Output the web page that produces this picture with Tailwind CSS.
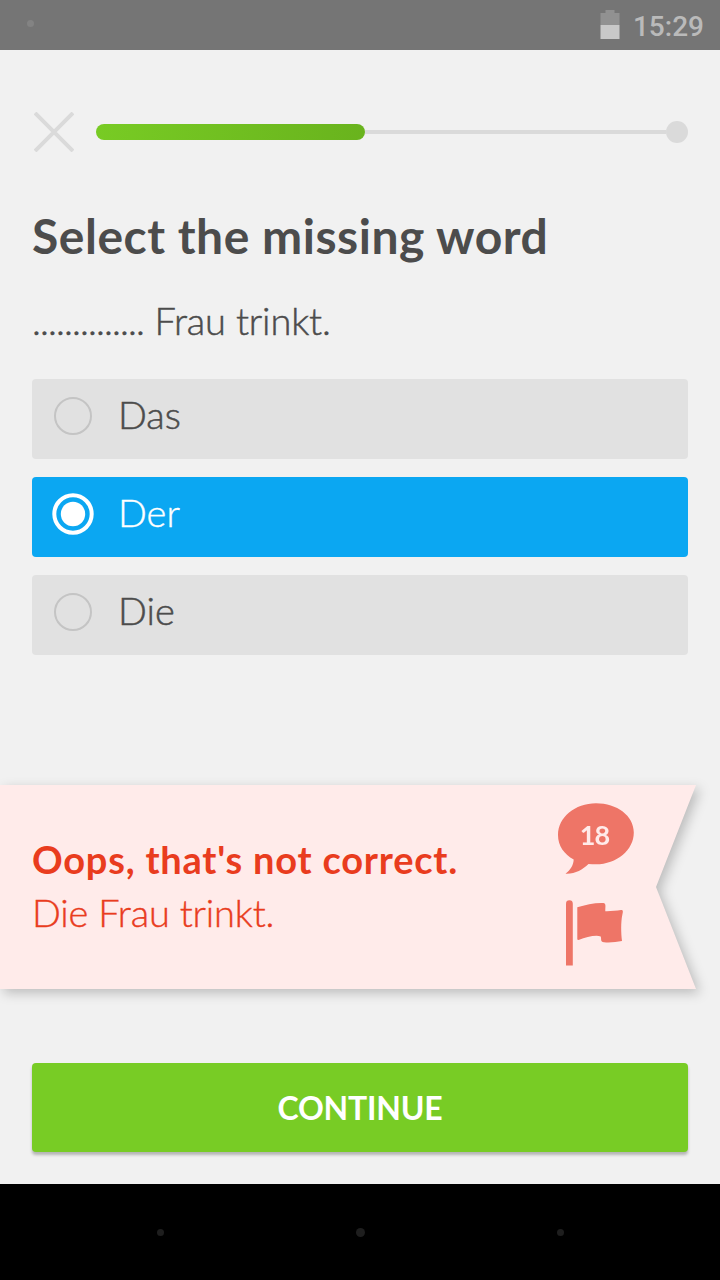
<!DOCTYPE html>
<html lang="en">
<head>
<meta charset="utf-8">
<title>Select the missing word</title>
<script src="https://cdn.jsdelivr.net/npm/@tailwindcss/browser@4"></script>
</head>
<body class="h-[1280px] w-[720px] overflow-hidden bg-[#f1f1f1] font-['Lato',sans-serif] text-[#4c4c4c]">
<div class="flex h-full flex-col">
  <header class="flex h-[50px] shrink-0 items-center justify-between bg-[#757575] pr-4 pl-[27px]">
    <span class="mb-[3px] size-[7px] rounded-full bg-[#838383]"></span>
    <div class="flex items-center">
      <svg class="h-[30px] w-5" viewBox="0 0 20 30"><path fill="#919191" d="M5.500 0h9v3h5v12h-19V3h5z"/><path fill="#c8c8c8" d="M.5 15h19v14h-19z"/></svg>
      <span class="ml-[13px] mt-[3px] font-['Roboto',sans-serif] text-[28px] leading-[50px] font-medium text-[#bababa]">15:29</span>
    </div>
  </header>

  <main class="flex flex-1 flex-col">
    <div class="mt-[62px] flex h-10 items-center px-8">
      <svg class="ml-0.5 size-10" viewBox="0 0 40 40" fill="none" stroke="#dadada" stroke-width="4"><path d="M1 1 39 39M39 1 1 39"/></svg>
      <div class="ml-[22px] h-4 w-[269px] rounded-full bg-linear-to-r from-[#78cb24] to-[#69b31d]"></div>
      <div class="h-1 flex-1 bg-[#dadada]"></div>
      <div class="size-[22px] rounded-full bg-[#dadada]"></div>
    </div>

    <h1 class="mt-[54px] px-8 text-[48px] leading-[60px] font-bold tracking-[0.52px] whitespace-nowrap">Select the missing word</h1>
    <p class="mt-[29px] px-8 text-[38px] leading-[50px] font-light whitespace-nowrap [-webkit-text-stroke:0.5px_currentColor]"><span class="tracking-[-0.87px]">..............</span> <span class="tracking-[-0.15px]">Frau trinkt.</span></p>

    <ul class="mt-[34px] flex flex-col gap-[18px] px-8">
      <li class="flex h-20 items-start rounded bg-[#e1e1e1] pl-5">
        <svg class="mt-4 size-[42px]" viewBox="0 0 42 42" fill="none"><circle cx="21" cy="21" r="18" stroke="#c4c4c4" stroke-width="2"/></svg>
        <span class="mt-[10px] ml-6 text-[38px] leading-[50px] font-light [-webkit-text-stroke:0.5px_currentColor]">Das</span>
      </li>
      <li class="flex h-20 items-start rounded bg-[#0ba7f2] pl-5 text-white">
        <svg class="mt-4 size-[42px]" viewBox="0 0 42 42" fill="none"><circle cx="21" cy="21" r="18.700" stroke="#fff" stroke-width="4"/><circle cx="21" cy="21" r="12.200" fill="#fff"/></svg>
        <span class="mt-[10px] ml-6 text-[38px] leading-[50px] font-light [-webkit-text-stroke:0.4px_currentColor]">Der</span>
      </li>
      <li class="flex h-20 items-start rounded bg-[#e1e1e1] pl-5">
        <svg class="mt-4 size-[42px]" viewBox="0 0 42 42" fill="none"><circle cx="21" cy="21" r="18" stroke="#c4c4c4" stroke-width="2"/></svg>
        <span class="mt-[10px] ml-6 text-[38px] leading-[50px] font-light [-webkit-text-stroke:0.5px_currentColor]">Die</span>
      </li>
    </ul>

    <section class="mt-[130px] w-[696px] drop-shadow-[4px_4px_6px_rgba(0,0,0,0.22)]">
      <div class="flex h-[204px] justify-between bg-[#ffebea] pl-8 text-[#e93c1e] [clip-path:polygon(0_0,100%_0,656px_50%,100%_100%,0_100%)]">
        <div class="pt-12 whitespace-nowrap">
          <p class="text-[38px] leading-[53px] font-bold tracking-[0.78px]">Oops, that's not correct.</p>
          <p class="text-[38px] leading-[53px] font-light tracking-[-0.18px] [-webkit-text-stroke:0.4px_currentColor]">Die Frau trinkt.</p>
        </div>
        <svg class="mr-[56px] h-[204px] w-[90px]" viewBox="550 785 90 204" fill="#ee7567">
          <path d="M596 803.300c21 0 37.800 12.500 37.800 29.200 0 17.500-17 31.800-37.800 31.800-2.600 0-5 0-7.500-.3-6 5.500-13.500 10.300-23 9.800 5-4 8-8.500 8.200-14.300-9.500-5.300-15.700-13.500-15.700-24.500 0-17.500 17-31.700 38-31.700z"/>
          <text x="594.500" y="845" text-anchor="middle" class="fill-[#ffebea] text-[27px] font-bold tracking-[-0.8px]">18</text>
          <path d="M566 903.700a3.400 3.400 0 0 1 6.800 0V965.500H566z"/>
          <path d="M577.300 907.300c8-2.500 18-4.700 26-4.300 3 .4 2 3 2 8.300 5 .2 11-.6 15.700-1.200 2.500-.3 2 2 1.300 5-1.500 7-1.300 18-.3 26-6 1-12 1.600-18 1.100-4-.3-2.300-3-3.300-5.700-5-2-15 1-21.500 3.300q-1.900.5-1.900-.8z"/>
        </svg>
      </div>
    </section>

    <div class="mt-[74px] px-8">
      <button class="block h-[89px] w-full rounded bg-[#78cc25] text-[32px] leading-[87px] font-bold tracking-[-0.2px] text-white shadow-[0_3px_3px_rgba(0,0,0,0.25)]">CONTINUE</button>
    </div>
  </main>

  <nav class="flex h-24 shrink-0 items-center justify-between bg-black pr-[156px] pl-[157px]">
    <span class="size-[7px] rounded-full bg-[#1e1e1e]"></span>
    <span class="size-[9px] rounded-full bg-[#1e1e1e]"></span>
    <span class="size-[7px] rounded-full bg-[#1e1e1e]"></span>
  </nav>
</div>
</body>
</html>
